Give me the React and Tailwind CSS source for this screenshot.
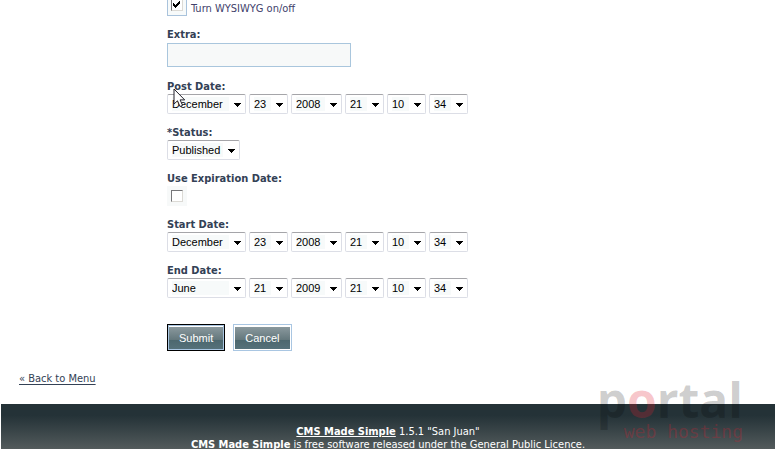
import { useState } from 'react';

const MONTHS = ['January', 'February', 'March', 'April', 'May', 'June', 'July', 'August', 'September', 'October', 'November', 'December'];
const range = (from, to) => Array.from({ length: to - from + 1 }, (_, i) => String(from + i));
const YEARS = range(2005, 2015);
const DAYS = range(1, 31);
const HOURS = range(0, 23);
const SIXTY = range(0, 59);

function Select({ id, label, options, value, className }) {
  const [current, setCurrent] = useState(value);
  return (
    <span className={`relative inline-block ${className}`}>
      <select id={id} aria-label={label} value={current} onChange={e => setCurrent(e.target.value)}
        className="block w-full h-5 appearance-none rounded-xs border border-[#dcdee6] border-t-[#a5a5a9] bg-[#f7fafa] bg-clip-content py-0.5 pl-1 pr-4 font-['Liberation_Sans',Arial,sans-serif] text-[11px] leading-3.5 text-black">
        {options.map(o => <option key={o}>{o}</option>)}
      </select>
      <svg viewBox="0 0 7 4" shapeRendering="crispEdges" className="pointer-events-none absolute right-[5px] top-[9px] w-[7px] h-1">
        <path d="M0 0h7v1h-1v1h-1v1h-1v1h-1v-1h-1v-1h-1v-1h-1z" fill="#000" />
      </svg>
    </span>
  );
}

function DateRow({ id, title, date }) {
  const [month, day, year, hour, minute, second] = date;
  return (
    <div>
      <label htmlFor={id} className="block h-4 leading-[18px] font-bold">{title}:</label>
      <div className="flex gap-[3px]">
        <Select id={id} options={MONTHS} value={month} className="w-[79px]" />
        <Select label="Day" options={DAYS} value={day} className="w-[39px]" />
        <Select label="Year" options={YEARS} value={year} className="w-[51px]" />
        <Select label="Hour" options={HOURS} value={hour} className="w-[39px]" />
        <Select label="Minute" options={SIXTY} value={minute} className="w-[39px]" />
        <Select label="Second" options={SIXTY} value={second} className="w-[39px]" />
      </div>
    </div>
  );
}

function Checkbox({ id, defaultChecked }) {
  return (
    <span className="relative block w-3 h-3 shrink-0">
      <input id={id} type="checkbox" defaultChecked={defaultChecked}
        className="peer block w-3 h-3 appearance-none border border-[#dcdad5] border-t-[#77777a] border-l-[#77777a] bg-white" />
      <svg viewBox="0 0 12 12" shapeRendering="crispEdges" className="pointer-events-none absolute inset-0 hidden peer-checked:block">
        <path d="M2 4h1v1h1v1h1v-1h1v-1h1v-1h1v-1h1v3h-1v1h-1v1h-1v1h-1v1h-1v-1h-1v-1h-1z" fill="#000" />
      </svg>
    </span>
  );
}

function Watermark() {
  return (
    <div className="pointer-events-none absolute right-8 -top-7 flex flex-col items-end">
      <div className="h-12 font-['Open_Sans',sans-serif] text-[48px] leading-12 font-bold text-black/20">
        p<span className="text-[#e02030]/25">o</span>rtal
      </div>
      <div className="font-['DejaVu_Sans_Mono',monospace] text-[18px] leading-4 text-[#d02030]/30">web hosting</div>
    </div>
  );
}

export default function App() {
  const now = ['December', '23', '2008', '21', '10', '34'];
  return (
    <div className="overflow-hidden bg-white font-['DejaVu_Sans_Condensed','DejaVu_Sans',Tahoma,sans-serif] text-[11px] text-[#334155]">
      <form onSubmit={e => e.preventDefault()} className="pl-[167px]">
        <div className="flex h-4 items-end gap-1">
          <div className="flex w-5 h-4 items-end justify-center border border-t-0 border-[#a9c3dc] bg-[#f7fafa] pb-1">
            <Checkbox id="wysiwyg" defaultChecked />
          </div>
          <label htmlFor="wysiwyg" className="h-4 leading-[18px] text-[#41416b]">Turn WYSIWYG on/off</label>
        </div>

        <div className="mt-2.5 flex flex-col gap-2.5">
          <div className="pb-px">
            <label htmlFor="extra" className="block h-4 leading-[18px] font-bold">Extra:</label>
            <input id="extra" type="text" className="mt-px block w-46 h-6 border border-[#a9c6dd] bg-[#f7f9f9] px-1" />
          </div>
          <div className="relative">
            <DateRow id="post" title="Post Date" date={now} />
            <svg viewBox="0 0 12 20" className="pointer-events-none absolute left-1.5 top-2.5 w-3 h-5">
              <path d="M1 1v15l3.500-3.200 2.500 5.700 2.600-1.100-2.500-5.500h4.600z" fill="#fff" stroke="#22222c" />
            </svg>
          </div>
          <div>
            <label htmlFor="status" className="block h-4 leading-[18px] font-bold">*Status:</label>
            <Select id="status" options={['Draft', 'Published']} value="Published" className="block w-[73px]" />
          </div>
          <div>
            <label htmlFor="expires" className="block h-4 leading-[18px] font-bold">Use Expiration Date:</label>
            <div className="flex w-5 h-5 items-center justify-center bg-[#f7f9f9]">
              <Checkbox id="expires" />
            </div>
          </div>
          <DateRow id="start" title="Start Date" date={now} />
          <DateRow id="end" title="End Date" date={['June', '21', '2009', '21', '10', '34']} />
        </div>

        <div className="mt-6.5 flex gap-2 font-['Liberation_Sans',Arial,sans-serif] text-white">
          <button type="submit" className="border border-black">
            <span className="block h-[25px] border border-[#a9c6e2] bg-[linear-gradient(#fff_1px,#8a989d_1px,#63777c_14px,#4c676e_14px,#55717a)] px-2.5 leading-6">Submit</span>
          </button>
          <button type="button" className="border border-[#a9c6e2]">
            <span className="block h-[25px] border border-white bg-[linear-gradient(#fff_1px,#8a989d_1px,#63777c_14px,#4c676e_14px,#55717a)] px-2.5 leading-6">Cancel</span>
          </button>
        </div>
      </form>

      <p className="mt-5 pl-[19px] leading-4">
        <a href="#menu" className="underline underline-offset-2">« Back to Menu</a>
      </p>

      <footer className="relative mx-px mt-[17px] h-[45px] bg-linear-to-b from-[#243237] from-25% to-[#535b5c] pt-[21px] text-center leading-[13px] text-white">
        <p><a href="#cms" className="font-bold underline">CMS Made Simple</a> 1.5.1 "San Juan"</p>
        <p><b>CMS Made Simple</b> is free software released under the General Public Licence.</p>
        <Watermark />
      </footer>
    </div>
  );
}
